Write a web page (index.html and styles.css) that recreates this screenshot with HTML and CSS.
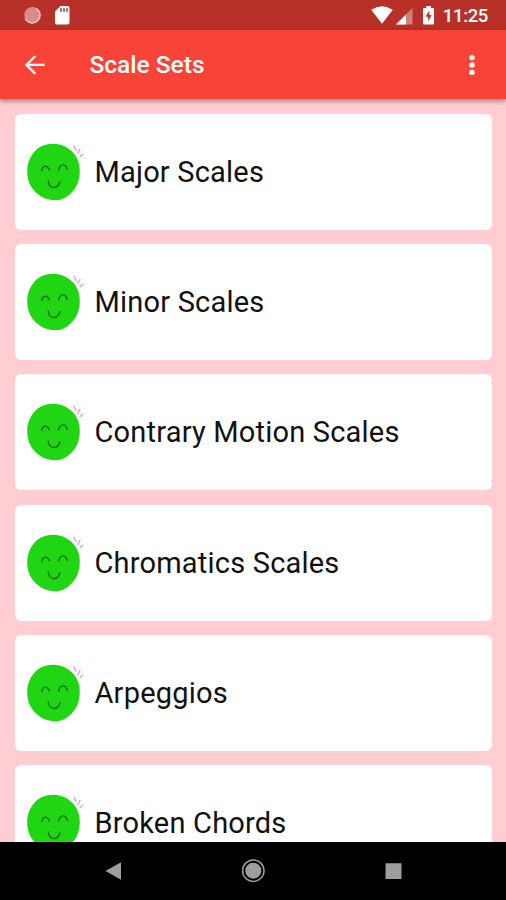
FILE: index.html
```html
<!DOCTYPE html>
<html lang="en">
<head>
<meta charset="utf-8">
<title>Scale Sets</title>
<link rel="stylesheet" href="styles.css">
</head>
<body>
<svg class="defs" width="0" height="0" aria-hidden="true">
  <symbol id="face" viewBox="25 141 60 60">
    <path d="M53 142.8C61 142.6 68.5 146.5 73.5 152C78.2 157.5 80.2 164 79.7 172C79.3 179.5 77 185.5 72.5 190.5C67.5 196 62 199.3 55.5 199.3C46.5 199.3 39.5 195.5 34 189.5C29 183.8 27.3 177.5 27.2 170.5C27.2 162.5 30 155 35.5 149.5C40.5 144.7 46 143 53 142.8Z" fill="#20d512"/>
    <g fill="none" stroke="#176c12" stroke-width="1.4" stroke-linecap="round">
      <path d="M41.6 169.5C43 164 46.8 163.8 49.4 168.6"/>
      <path d="M58.6 169C60.2 162.3 65.5 162.3 67.2 168.3"/>
      <path d="M48.2 180C49.5 188.6 57.5 188.6 59.9 180.7"/>
    </g>
    <g fill="none" stroke="#f58fce" stroke-width="1.2" stroke-linecap="round">
      <path d="M74 145L76 149.5M80 148.3L77.8 152.5M82.9 153.2L80 155.7"/>
    </g>
  </symbol>
</svg>
<div class="screen">
  <div class="status">
    <svg width="506" height="30" viewBox="0 0 506 30">
      <circle cx="32.3" cy="15" r="8" fill="#d98d88"/>
      <path d="M36 8.3A7.8 7.8 0 1 1 25.2 18.5" fill="none" stroke="#efc4c0" stroke-width="1.5"/>
      <path d="M60.5 6H67.5Q69.5 6 69.5 8V22.5Q69.5 24.5 67.5 24.5H57Q55 24.5 55 22.5V11.5Z" fill="#fff"/>
      <path d="M61 8.2V11.8M64 8.2V11.8M67 8.2V11.8" stroke="#b93a31" stroke-width="1.6"/>
      <path d="M371.2 9.8Q382 2.8 392.8 9.8L382 23.8Z" fill="#fff"/>
      <path d="M412.5 8V24.5H396Z" fill="#d47f79"/>
      <path d="M406 14.5V24.5H396Z" fill="#fff"/>
      <path d="M426.2 6H430.8V8H432.8Q434 8 434 9.3V23.3Q434 24.6 432.8 24.6H424.2Q423 24.6 423 23.3V9.3Q423 8 424.2 8H426.2Z" fill="#fff"/>
      <path d="M429.4 10.5L425.5 16.7H428.1V21.5L431.6 15.1H429.2Z" fill="#b73129"/>
    </svg>
    <span class="clock">11:25</span>
  </div>
  <header class="appbar">
    <svg class="back" width="20" height="20" viewBox="0 0 20 20"><path d="M10.3 1L1.4 9.9L10.3 18.8M1.4 9.9H19.5" fill="none" stroke="#fff" stroke-width="2.3"/></svg>
    <h1>Scale Sets</h1>
    <svg class="more" width="6" height="22" viewBox="0 0 6 22" fill="#fff"><circle cx="3" cy="3.6" r="2.7"/><circle cx="3" cy="11" r="2.7"/><circle cx="3" cy="18.4" r="2.7"/></svg>
  </header>
  <main class="list">
    <div class="card"><svg class="face"><use href="#face"/></svg><span>Major Scales</span></div>
    <div class="card"><svg class="face"><use href="#face"/></svg><span>Minor Scales</span></div>
    <div class="card"><svg class="face"><use href="#face"/></svg><span>Contrary Motion Scales</span></div>
    <div class="card"><svg class="face"><use href="#face"/></svg><span>Chromatics Scales</span></div>
    <div class="card"><svg class="face"><use href="#face"/></svg><span>Arpeggios</span></div>
    <div class="card"><svg class="face"><use href="#face"/></svg><span>Broken Chords</span></div>
  </main>
  <nav class="nav">
    <svg width="506" height="58" viewBox="0 0 506 58" fill="#9e9e9e">
      <path d="M105.5 29L121 20.2V37.8Z"/>
      <circle cx="253.3" cy="28.7" r="8"/>
      <circle cx="253.3" cy="28.7" r="10.7" fill="none" stroke="#9e9e9e" stroke-width="1.5"/>
      <rect x="385.5" y="21.3" width="16" height="15.7" rx=".5"/>
    </svg>
  </nav>
</div>
</body>
</html>
```
FILE: styles.css
```css
* { box-sizing: border-box; }
body { margin: 0; font-family: Roboto, "Liberation Sans", sans-serif; }
svg { display: block; flex: none; }
.defs { position: absolute; }
.screen { width: 506px; height: 900px; display: flex; flex-direction: column; overflow: hidden; background: #ffcdd2; }
.status { position: relative; flex: none; height: 30px; background: #b73129; color: #fff; }
.clock { position: absolute; right: 18px; top: 5px; font-size: 18.5px; line-height: 22px; font-weight: 500; letter-spacing: -.35px; }
.appbar { position: relative; z-index: 1; flex: none; height: 69px; display: flex; align-items: center; padding: 0 31px 0 25px; background: #f84436; color: #fff; box-shadow: 0 2px 5px rgba(0,0,0,.4); }
h1 { margin: 1px 0 0 44.5px; font-size: 24.5px; line-height: 30px; font-weight: 500; letter-spacing: 0; }
.more { margin-left: auto; }
.list { flex: 1; min-height: 0; overflow: hidden; display: flex; flex-direction: column; gap: 14.4px; padding: 14.5px 14px 0 15px; }
.card { flex: none; height: 116px; display: flex; align-items: center; padding-left: 10px; border-radius: 6px; background: #fff; color: #111; font-size: 29px; letter-spacing: .2px; }
.face { width: 60px; height: 60px; }
.card span { margin-left: 9.5px; line-height: 36px; }
.nav { flex: none; height: 58px; background: #000; }
```
